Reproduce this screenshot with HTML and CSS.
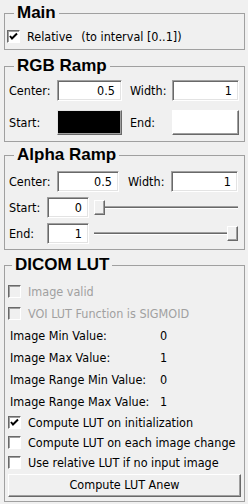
FILE: index.html
```html
<!DOCTYPE html>
<html>
<head>
<meta charset="utf-8">
<link rel="stylesheet" href="styles.css">
</head>
<body>
<div class="panel">
  <fieldset class="group g-main">
    <legend>Main</legend>
    <div class="row chk main-row">
      <span class="box"><svg width="11" height="11" viewBox="0 0 11 11"><polyline points="2,5 4,7.5 9,2.5" fill="none" stroke="#000" stroke-width="2"/></svg></span>
      <span>Relative</span><span class="note">(to interval [0..1])</span>
    </div>
  </fieldset>

  <fieldset class="group g-rgb">
    <legend>RGB Ramp</legend>
    <div class="row r1">
      <span class="lbl l-center">Center:</span>
      <span class="field f-c1">0.5</span>
      <span class="lbl l-width">Width:</span>
      <span class="field f-w1">1</span>
    </div>
    <div class="row r2">
      <span class="lbl l-center">Start:</span>
      <span class="swatch black"></span>
      <span class="lbl l-width">End:</span>
      <span class="swatch white"></span>
    </div>
  </fieldset>

  <fieldset class="group g-alpha">
    <legend>Alpha Ramp</legend>
    <div class="row a1">
      <span class="lbl l-center">Center:</span>
      <span class="field f-c2">0.5</span>
      <span class="lbl l-width2">Width:</span>
      <span class="field f-w2">1</span>
    </div>
    <div class="row a2">
      <span class="lbl l-short">Start:</span>
      <span class="field f-s">0</span>
      <span class="slider"><span class="track"></span><span class="thumb"></span></span>
    </div>
    <div class="row a3">
      <span class="lbl l-short">End:</span>
      <span class="field f-s">1</span>
      <span class="slider end"><span class="track"></span><span class="thumb"></span></span>
    </div>
  </fieldset>

  <fieldset class="group g-dicom">
    <legend>DICOM LUT</legend>
    <div class="row chk d-row disabled"><span class="box"></span><span>Image valid</span></div>
    <div class="row chk d-row disabled"><span class="box"></span><span>VOI LUT Function is SIGMOID</span></div>
    <div class="row d-row kv"><span class="k">Image Min Value:</span><span>0</span></div>
    <div class="row d-row kv"><span class="k">Image Max Value:</span><span>1</span></div>
    <div class="row d-row kv"><span class="k">Image Range Min Value:</span><span>0</span></div>
    <div class="row d-row kv"><span class="k">Image Range Max Value:</span><span>1</span></div>
    <div class="row chk c-row"><span class="box"><svg width="11" height="11" viewBox="0 0 11 11"><polyline points="2,5 4,7.5 9,2.5" fill="none" stroke="#000" stroke-width="2"/></svg></span><span>Compute LUT on initialization</span></div>
    <div class="row chk c-row"><span class="box"></span><span>Compute LUT on each image change</span></div>
    <div class="row chk c-row last"><span class="box"></span><span>Use relative LUT if no input image</span></div>
    <div class="button">Compute LUT Anew</div>
  </fieldset>
</div>
</body>
</html>
```

FILE: styles.css
```css
html, body {
  margin: 0;
  padding: 0;
  background: #f0f0f0;
}
body {
  width: 248px;
  height: 504px;
  overflow: hidden;
  font-family: "DejaVu Sans Condensed", "Liberation Sans", Arial, sans-serif;
  font-size: 12.5px;
  color: #000;
}
.panel {
  display: flex;
  flex-direction: column;
  padding: 4px 3px 0 4px;
}
.group {
  margin: 0;
  border: 1px solid #a0a0a0;
  padding: 0 4px 0 4px;
  min-width: 0;
  display: flex;
  flex-direction: column;
}
.group legend {
  font-family: "Liberation Sans", Arial, sans-serif;
  font-weight: bold;
  font-size: 17px;
  line-height: 18px;
  height: 18px;
  padding: 0 3px;
  margin-left: 5px;
}
.g-main { padding-top: 5px; padding-bottom: 4px; }
.g-rgb { margin-top: 7px; padding-top: 5px; padding-bottom: 6px; }
.g-alpha { margin-top: 4px; padding-top: 7px; padding-bottom: 5px; }
.g-dicom { margin-top: 6px; padding-top: 3px; padding-bottom: 4px; padding-left: 2px; padding-right: 3px; }

.row {
  display: flex;
  align-items: center;
}
.chk .box {
  width: 11px;
  height: 11px;
  border: 1px solid;
  border-color: #696969 #fff #fff #696969;
  box-shadow: inset 1px 1px 0 #a0a0a0;
  background: #fff;
  flex: none;
  display: flex;
  margin-right: 7px;
  margin-left: 1px;
}
.main-row { height: 18px; margin-left: -3px; }
.note { margin-left: 9px; }

.lbl { flex: none; }
.l-center { width: 48px; }
.l-width { width: 42px; margin-left: 8px; }
.l-width2 { width: 43px; margin-left: 9px; }
.l-short { width: 38px; }

.field {
  box-sizing: border-box;
  height: 21px;
  border: 1px solid;
  border-color: #a0a0a0 #fff #fff #a0a0a0;
  box-shadow: inset 1px 1px 0 #696969, inset -1px -1px 0 #e3e3e3;
  background: #fff;
  text-align: right;
  padding-right: 6px;
  line-height: 19px;
  flex: none;
}
.f-c1 { width: 65px; }
.f-w1 { width: 67px; }
.f-c2 { width: 62px; }
.f-w2 { width: 67px; }
.f-s { width: 42px; }

.r1 { height: 21px; }
.r2 { height: 25px; margin-top: 9px; }
.a1, .a2, .a3 { height: 21px; }
.a2, .a3 { margin-top: 5px; }

.swatch {
  box-sizing: border-box;
  height: 25px;
  flex: none;
  border: 1px solid;
  border-color: #fff #696969 #696969 #fff;
  box-shadow: inset -1px -1px 0 #a0a0a0;
}
.swatch.black { width: 65px; background: #000; border-color: #e3e3e3 #696969 #696969 #e3e3e3; }
.swatch.white { width: 67px; background: #fff; }

.slider {
  position: relative;
  flex: none;
  width: 144px;
  height: 21px;
  margin-left: 5px;
}
.slider .track {
  position: absolute;
  left: 0;
  right: 0;
  top: 9px;
  height: 1px;
  border-top: 1px solid #a0a0a0;
  border-bottom: 1px solid #fff;
  background: #696969;
}
.slider .thumb {
  position: absolute;
  top: 3px;
  left: 0;
  width: 11px;
  height: 15px;
  box-sizing: border-box;
  background: #f0f0f0;
  border: 1px solid;
  border-color: #fff #696969 #696969 #fff;
  box-shadow: inset -1px -1px 0 #a0a0a0;
}
.slider.end .thumb { left: auto; right: 0; }

.d-row { height: 22px; }
.d-row:first-of-type { margin-top: 3px; }
.disabled { color: #a0a0a0; }
.disabled .box { background: #f0f0f0; }
.kv .k { width: 150px; margin-left: 3px; }
.c-row { height: 20px; }
.c-row:first-of-type { margin-top: 1px; }
.c-row.last { height: 21px; }

.button {
  box-sizing: border-box;
  height: 23px;
  margin-top: 1px;
  margin-left: 1px;
  border: 1px solid;
  border-color: #fff #696969 #696969 #fff;
  box-shadow: inset -1px -1px 0 #a0a0a0;
  background: #f0f0f0;
  text-align: center;
  line-height: 20px;
}
```
